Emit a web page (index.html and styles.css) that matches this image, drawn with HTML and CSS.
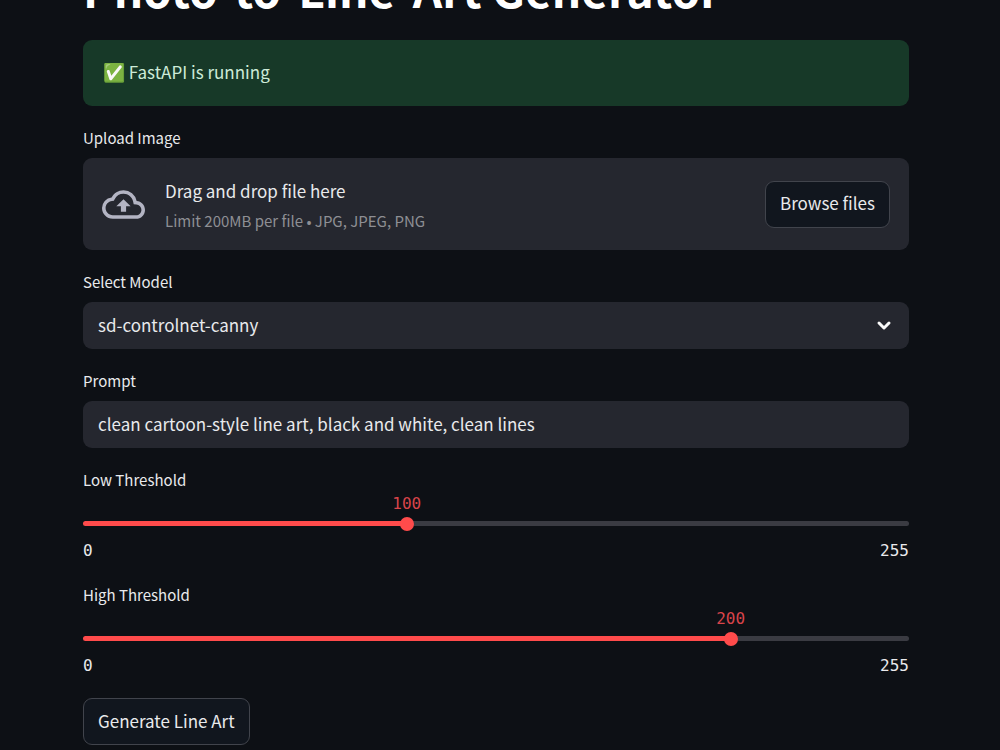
FILE: index.html
```html
<!DOCTYPE html>
<html lang="en">
<head>
  <meta charset="UTF-8">
  <meta name="viewport" content="width=device-width, initial-scale=1.0">
  <title>Photo-to-Line-Art Generator</title>
  <link rel="stylesheet" href="styles.css">
</head>
<body>
  <main class="container">
    <h1 class="title">Photo-to-Line-Art Generator</h1>

    <div class="alert" role="status"><span class="emoji">✅</span> FastAPI is running</div>

    <div class="field">
      <label for="browse-btn">Upload Image</label>
      <div class="uploader">
        <svg class="cloud-icon" viewBox="0 0 24 24" aria-hidden="true">
          <path d="M19.35 10.04A7.49 7.49 0 0 0 12 4C9.11 4 6.6 5.64 5.35 8.04A5.994 5.994 0 0 0 0 14c0 3.31 2.69 6 6 6h13c2.76 0 5-2.24 5-5 0-2.64-2.05-4.78-4.65-4.96zM19 18H6c-2.21 0-4-1.79-4-4 0-2.05 1.53-3.76 3.56-3.97l1.07-.11.5-.95A5.469 5.469 0 0 1 12 6c2.62 0 4.88 1.86 5.39 4.43l.3 1.5 1.53.11A2.98 2.98 0 0 1 22 15c0 1.65-1.35 3-3 3zM8 13h2.55v3h2.9v-3H16l-4-4z"/>
        </svg>
        <div class="uploader-text">
          <span>Drag and drop file here</span>
          <small>Limit 200MB per file • JPG, JPEG, PNG</small>
        </div>
        <button type="button" class="btn" id="browse-btn">Browse files</button>
      </div>
    </div>

    <div class="field">
      <label for="model">Select Model</label>
      <div class="select-wrap">
        <select id="model" class="control">
          <option>sd-controlnet-canny</option>
        </select>
        <svg class="chevron" viewBox="0 0 20 20" aria-hidden="true">
          <path d="M5 8l5 5 5-5"/>
        </svg>
      </div>
    </div>

    <div class="field">
      <label for="prompt">Prompt</label>
      <input type="text" id="prompt" class="control" value="clean cartoon-style line art, black and white, clean lines">
    </div>

    <div class="field slider" style="--pos: 39.2%">
      <label for="low">Low Threshold</label>
      <div class="slider-value"><output for="low">100</output></div>
      <div class="slider-track">
        <input type="range" id="low" min="0" max="255" value="100">
      </div>
      <div class="slider-range"><span>0</span><span>255</span></div>
    </div>

    <div class="field slider" style="--pos: 78.4%">
      <label for="high">High Threshold</label>
      <div class="slider-value"><output for="high">200</output></div>
      <div class="slider-track">
        <input type="range" id="high" min="0" max="255" value="200">
      </div>
      <div class="slider-range"><span>0</span><span>255</span></div>
    </div>

    <button type="button" class="btn generate">Generate Line Art</button>
  </main>

  <script>
    document.querySelectorAll('.slider').forEach(slider => {
      const input = slider.querySelector('input');
      input.addEventListener('input', () => {
        slider.style.setProperty('--pos', (input.value / input.max * 100) + '%');
        slider.querySelector('output').textContent = input.value;
      });
    });
  </script>
</body>
</html>
```
FILE: styles.css
```css
* {
  box-sizing: border-box;
}
body {
  margin: 0;
  background-color: #0d1015;
  color: #e9eaec;
  font-family: "Noto Sans CJK JP", "Noto Sans", sans-serif;
  font-size: 17px;
  line-height: 26px;
  overflow: hidden;
}
.container {
  display: flex;
  flex-direction: column;
  gap: 20px;
  padding: 0 91px 0 83px;
}
.title {
  margin: -44px 0 0;
  color: #ffffff;
  font-size: 46px;
  font-weight: 700;
  line-height: 64px;
}
.alert {
  padding: 19px 20px 21px;
  border-radius: 9px;
  background-color: #173928;
  color: #cdebd8;
}
.emoji {
  font-size: 18px;
  line-height: 18px;
}
.field {
  display: flex;
  flex-direction: column;
}
.field label {
  margin-bottom: 8px;
  font-size: 15px;
  line-height: 24px;
}
.uploader {
  display: flex;
  align-items: center;
  gap: 20px;
  min-height: 92px;
  padding: 0 19px;
  border-radius: 9px;
  background-color: #25272f;
}
.cloud-icon {
  width: 43px;
  height: 43px;
  fill: #b3b4c3;
}
.uploader-text {
  display: flex;
  flex: 1;
  flex-direction: column;
  gap: 4px;
  padding-top: 3px;
}
.uploader-text small {
  color: #8e8f94;
  font-size: 15px;
}
.btn {
  height: 47px;
  padding: 0 14px 2px;
  border: 1px solid #41444c;
  border-radius: 9px;
  background-color: #11161e;
  color: inherit;
  font: inherit;
  cursor: pointer;
}
.select-wrap {
  position: relative;
}
.control {
  display: block;
  width: 100%;
  height: 47px;
  padding: 0 15px 2px;
  border: none;
  border-radius: 9px;
  background-color: #25272f;
  color: inherit;
  font: inherit;
  appearance: none;
}
.chevron {
  position: absolute;
  top: 13px;
  right: 15px;
  width: 20px;
  height: 20px;
  fill: none;
  stroke: #fafafa;
  stroke-width: 3;
  stroke-linecap: round;
  stroke-linejoin: round;
  pointer-events: none;
}
.slider label {
  margin-bottom: 0;
}
.slider-value,
.slider-range {
  font-family: "DejaVu Sans Mono", monospace;
  font-size: 16px;
  line-height: 24px;
}
.slider-value {
  position: relative;
  height: 24px;
  color: #d8444a;
}
.slider-value output {
  position: absolute;
  left: var(--pos);
  transform: translateX(-50%);
}
.slider-track {
  display: flex;
  align-items: center;
  height: 5px;
  margin: 5px 0 13px;
  border-radius: 3px;
  background: linear-gradient(to right, #ff4b4b var(--pos), #3a3b42 var(--pos));
}
/* wider than the track by one thumb, so the thumb centre reaches both ends */
.slider-track input {
  flex: none;
  width: calc(100% + 14px);
  height: 14px;
  margin: 0 -7px;
  background: none;
  appearance: none;
  cursor: pointer;
}
.slider-track input::-webkit-slider-thumb {
  width: 14px;
  height: 14px;
  border-radius: 50%;
  background-color: #ff4b4b;
  appearance: none;
}
.slider-range {
  display: flex;
  justify-content: space-between;
}
.generate {
  align-self: flex-start;
}
```
